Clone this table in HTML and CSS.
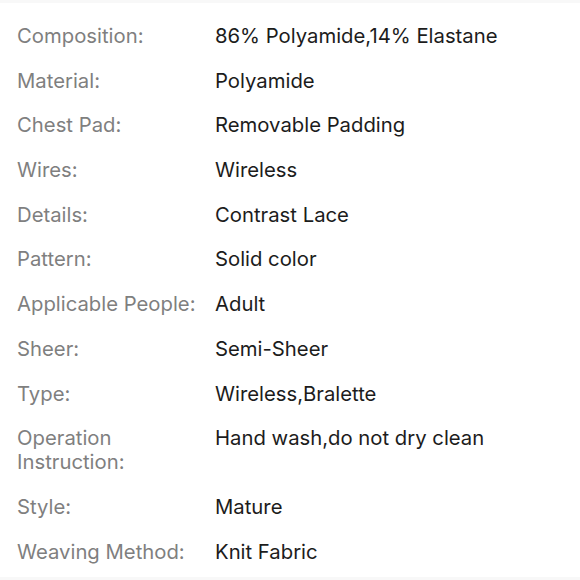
FILE: index.html
```html
<!DOCTYPE html>
<html lang="en">
<head>
<meta charset="utf-8">
<title>Product details</title>
<link rel="stylesheet" href="styles.css">
</head>
<body>
<div class="band"></div>
<dl class="specs">
  <dt>Composition:</dt><dd>86% Polyamide,14% Elastane</dd>
  <dt>Material:</dt><dd>Polyamide</dd>
  <dt>Chest Pad:</dt><dd>Removable Padding</dd>
  <dt>Wires:</dt><dd>Wireless</dd>
  <dt>Details:</dt><dd>Contrast Lace</dd>
  <dt>Pattern:</dt><dd>Solid color</dd>
  <dt>Applicable People:</dt><dd>Adult</dd>
  <dt>Sheer:</dt><dd>Semi-Sheer</dd>
  <dt>Type:</dt><dd>Wireless,Bralette</dd>
  <dt>Operation Instruction:</dt><dd>Hand wash,do not dry clean</dd>
  <dt>Style:</dt><dd>Mature</dd>
  <dt>Weaving Method:</dt><dd>Knit Fabric</dd>
</dl>
<div class="band band-bottom"></div>
</body>
</html>
```
FILE: styles.css
```css
html, body {
  margin: 0;
  padding: 0;
  background: #ffffff;
}
body {
  width: 580px;
  height: 580px;
  overflow: hidden;
  font-family: Inter, "Noto Sans", sans-serif;
  font-size: 20.3px;
  line-height: 24px;
}
.band {
  height: 3px;
  background: #f8f8f8;
}
.band-bottom {
  height: 4px;
}
.specs {
  margin: 0;
  padding: 21px 0 13px 17px;
  display: grid;
  grid-template-columns: 190px 1fr;
  column-gap: 8px;
  row-gap: 20.7px;
}
.specs dt {
  color: #7f7f7f;
  margin: 0;
}
.specs dd {
  color: #1c1c1c;
  margin: 0;
}
```
